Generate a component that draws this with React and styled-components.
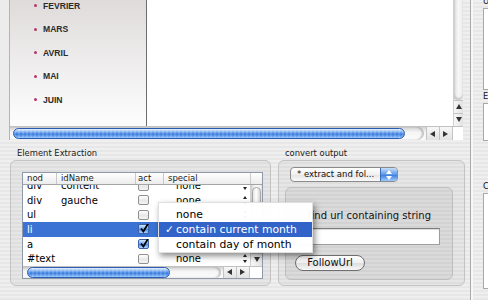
import React from 'react';
import styled, {createGlobalStyle, css} from 'styled-components';

const GlobalStyle = createGlobalStyle`
  html, body {
    margin: 0;
    padding: 0;
  }
  body {
    width: 488px;
    height: 300px;
    overflow: hidden;
    font-family: "DejaVu Sans", "Liberation Sans", sans-serif;
    color: #111;
  }
`;

const pinstripe = css`
  background: repeating-linear-gradient(180deg, #efefef 0 2px, #e7e7e7 2px 4px);
`;

const MONTHS = ['FEVRIER', 'MARS', 'AVRIL', 'MAI', 'JUIN'];

const NODES = [
    {nod: 'div', idName: 'content', act: false},
    {nod: 'div', idName: 'gauche', act: false},
    {nod: 'ul', idName: '', act: false},
    {nod: 'li', idName: '', act: true, selected: true},
    {nod: 'a', idName: '', act: true},
    {nod: '#text', idName: '', act: false},
];

const COLS = '33px 79px 28px 87px';

const Screen = styled.div`
  position: relative;
  width: 488px;
  height: 300px;
  overflow: hidden;
  display: flex;
  ${pinstripe}
`;

const MainColumn = styled.div`
  width: 470px;
  flex: none;
  display: flex;
  flex-direction: column;
`;

const WebFrame = styled.div`
  display: flex;
  height: 140px;
`;

const FrameStrip = styled.div`
  width: 9px;
  border-right: 1px solid #b4b4b4;
  background: #ececec;
`;

const WebView = styled.div`
  width: 453px;
  display: flex;
  flex-direction: column;
`;

const WebContent = styled.div`
  display: flex;
  height: 127px;
`;

const MonthList = styled.ul`
  width: 137px;
  box-sizing: border-box;
  margin: 0;
  padding: 0 0 0 24px;
  list-style: none;
  background: linear-gradient(#dfdbdb, #fbfbfb 92%);
  border-right: 1px solid #6d6d6d;
  display: flex;
  flex-direction: column;
  gap: 12.6px;
`;

const MonthItem = styled.li`
  display: flex;
  align-items: center;
  gap: 6px;
  height: 11px;
  font: bold 8.6px "Liberation Sans", Arial, sans-serif;
  color: #2b2b2b;

  &::before {
    content: '';
    width: 3px;
    height: 3px;
    border-radius: 50%;
    background: #b4386a;
  }
`;

const Page = styled.div`
  width: 306px;
  background: #fff;
`;

const VScroll = styled.div`
  width: ${p => p.$w}px;
  box-sizing: border-box;
  display: flex;
  flex-direction: column;
  border-left: 1px solid #cfcfcf;
  background: linear-gradient(90deg, #dadada, #f7f7f7 45%, #efefef);
`;

const VTrack = styled.div`
  flex: 1;
  position: relative;
  border-bottom-left-radius: 6px;
  border-bottom-right-radius: 6px;
  box-shadow: inset 0 -2px 2px rgba(0, 0, 0, 0.18);
`;

const VThumb = styled.div`
  margin: ${p => p.$top}px 1px 0;
  height: ${p => p.$h}px;
  border-radius: 5px;
  border: 1px solid #a6a6a6;
  background: linear-gradient(90deg, #e2e2e2, #ffffff 45%, #d6d6d6);
`;

const ArrowCell = styled.div`
  flex: none;
  width: ${p => (p.$vertical ? 'auto' : '12px')};
  height: ${p => (p.$vertical ? '12px' : 'auto')};
  display: flex;
  align-items: center;
  justify-content: center;
  background: linear-gradient(${p => (p.$vertical ? '90deg' : '180deg')}, #f7f7f7, #e2e2e2);
  border-${p => (p.$vertical ? 'top' : 'left')}: 1px solid #c4c4c4;
  color: #333;
`;

const Arrow = ({dir, vertical}) => {
    const points = {
        up: '3,0 6,5 0,5',
        down: '0,0 6,0 3,5',
        left: '0,3 5,0 5,6',
        right: '0,0 5,3 0,6',
    }[dir];
    return (
        <ArrowCell $vertical={vertical}>
            <svg width="6" height="6" viewBox="0 0 6 6">
                <polygon points={points} fill="currentColor"/>
            </svg>
        </ArrowCell>
    );
};

const HScroll = styled.div`
  height: ${p => p.$h}px;
  display: flex;
  background: linear-gradient(#d2d2d2, #f5f5f5 40%, #fbfbfb);
  border-top: 1px solid #c2c2c2;
`;

const HRail = styled.div`
  flex: 1;
  display: flex;
  align-items: center;
  padding-left: ${p => p.$pad}px;
  margin-right: 2px;
  border-radius: 0 7px 7px 0;
  box-shadow: inset -2px 0 2px rgba(0, 0, 0, 0.22);
`;

const AquaThumb = styled.div`
  width: ${p => p.$w}px;
  height: 11px;
  box-sizing: border-box;
  border-radius: 6px;
  border: 1px solid #2a5bb0;
  background:
    repeating-linear-gradient(90deg, rgba(255, 255, 255, 0.14) 0 2px, rgba(255, 255, 255, 0) 2px 4px),
    linear-gradient(#e6f0fd 0%, #8cb8f1 30%, #4a89e4 50%, #3f7fe0 62%, #93c7fc 100%);
`;

const Corner = styled.div`
  width: ${p => p.$w}px;
  background: #fff;
  border-left: 1px solid #c4c4c4;
`;

const HScrollBar = ({height, pad, thumb, corner}) => (
    <HScroll $h={height}>
        <HRail $pad={pad}>
            <AquaThumb $w={thumb}/>
        </HRail>
        <Arrow dir="left"/>
        <Arrow dir="right"/>
        <Corner $w={corner}/>
    </HScroll>
);

const ControlsRow = styled.div`
  display: flex;
  gap: 7px;
  padding: 7px 0 0 10px;
`;

const Group = styled.div`
  width: ${p => p.$w}px;
  display: flex;
  flex-direction: column;
`;

const GroupLabel = styled.div`
  height: 13px;
  line-height: 13px;
  padding-left: 7px;
  font-size: 8.4px;
  color: #1a1a1a;
`;

const GroupFrame = styled.div`
  height: 126px;
  box-sizing: border-box;
  border: 1px solid #c3c3c3;
  border-radius: 6px;
  background: rgba(0, 0, 0, 0.035);
  display: flex;
  flex-direction: column;
  align-items: flex-start;
  padding: ${p => p.$pad};
`;

const Table = styled.div`
  width: 241px;
  height: 107px;
  box-sizing: border-box;
  border: 1px solid #8e99aa;
  background: #fff;
  display: flex;
  flex-direction: column;
`;

const HeaderRow = styled.div`
  height: 12px;
  box-sizing: border-box;
  display: grid;
  grid-template-columns: ${COLS} 12px;
  border-bottom: 1px solid #a4a4a4;
  background: linear-gradient(#ffffff, #ececec);
  font-size: 8.5px;
  line-height: 11px;
  color: #1d1d1d;
`;

const HeaderCell = styled.div`
  padding-left: ${p => p.$pad}px;
  border-left: ${p => (p.$first ? 'none' : '1px solid #c9c9c9')};
  white-space: nowrap;
`;

const TableBody = styled.div`
  height: 81px;
  display: flex;
`;

const RowsViewport = styled.div`
  width: 227px;
  overflow: hidden;
`;

const RowsScroller = styled.div`
  margin-top: -6.6px;
`;

const Row = styled.div`
  height: 14.6px;
  display: grid;
  grid-template-columns: ${COLS};
  align-items: center;
  font-size: 10px;
  white-space: nowrap;
  background: ${p => (p.$selected ? '#3a73d4' : 'transparent')};
  color: ${p => (p.$selected ? '#fff' : '#000')};
`;

const Cell = styled.div`
  padding-left: ${p => p.$pad}px;
  overflow: hidden;
`;

const SpecialCell = styled.div`
  display: flex;
  align-items: center;
  justify-content: space-between;
  padding: 0 3px 0 13px;
  color: #000;
`;

const Box = styled.div`
  position: relative;
  width: 11px;
  height: 10px;
  box-sizing: border-box;
  border-radius: 2px;
  border: 1px solid ${p => (p.$checked ? '#3b62a6' : '#8f8f8f')};
  background: ${p => (p.$checked
        ? 'linear-gradient(#d4e6fc, #6ea6ee 50%, #4d8fe6 55%, #aad3ff)'
        : 'linear-gradient(#ffffff, #e8e8e8 55%, #f4f4f4)')};

  svg {
    position: absolute;
    left: 0;
    top: -3px;
  }
`;

const Checkbox = ({checked}) => (
    <Box $checked={checked}>
        {checked && (
            <svg width="11" height="12" viewBox="0 0 11 12">
                <path d="M2 6.5 L4.4 9.5 L9.5 1" stroke="#000" strokeWidth="1.8" fill="none"/>
            </svg>
        )}
    </Box>
);

const Stepper = () => (
    <svg width="4" height="9" viewBox="0 0 4 9">
        <polygon points="2,0 4,3 0,3" fill="#222"/>
        <polygon points="0,6 4,6 2,9" fill="#222"/>
    </svg>
);

const PopupButton = styled.div`
  margin-left: 5px;
  width: 108px;
  height: 15px;
  box-sizing: border-box;
  display: flex;
  border: 1px solid #8b8b8b;
  border-radius: 4px;
  overflow: hidden;
  background: linear-gradient(#ffffff, #f1f1f1 50%, #e4e4e4 52%, #fafafa);
  font-size: 8.5px;
  line-height: 13px;
`;

const PopupText = styled.div`
  flex: 1;
  padding-left: 6px;
  white-space: nowrap;
`;

const PopupArrows = styled.div`
  width: 16px;
  display: flex;
  align-items: center;
  justify-content: center;
  border-left: 1px solid #3d6cb8;
  background: linear-gradient(#c9dffa, #5c98e8 50%, #3c7edf 55%, #9ccbfd);
`;

const InnerBox = styled.div`
  margin-top: 5px;
  width: 168px;
  flex: 1;
  box-sizing: border-box;
  border: 1px solid #bebebe;
  border-radius: 6px;
  background: rgba(0, 0, 0, 0.05);
  display: flex;
  flex-direction: column;
  align-items: flex-start;
  padding-top: 22px;
`;

const FieldLabel = styled.div`
  padding-left: 22px;
  height: 12px;
  line-height: 12px;
  font-size: 10px;
  white-space: nowrap;
`;

const TextField = styled.div`
  margin: 6px 0 0 7px;
  width: 147px;
  height: 17px;
  box-sizing: border-box;
  border: 1px solid #9c9c9c;
  border-top-color: #7c7c7c;
  background: #fff;
  box-shadow: inset 0 1px 1px rgba(0, 0, 0, 0.15);
`;

const PushButton = styled.div`
  margin: 10px 0 0 9px;
  width: 70px;
  height: 16px;
  box-sizing: border-box;
  border: 1px solid #6e6e6e;
  border-radius: 8px;
  background: linear-gradient(#ffffff, #f0f0f0 48%, #dedede 52%, #f7f7f7);
  font-size: 10px;
  line-height: 14px;
  text-align: center;
`;

const Splitter = styled.div`
  width: 2px;
  flex: none;
  border-left: 1px solid #a9a9a9;
  background: #f7f7f7;
`;

const SideColumn = styled.div`
  flex: 1;
  display: flex;
  flex-direction: column;
  padding-left: 10px;
  min-width: 0;
`;

const SideLabel = styled.div`
  height: 12px;
  line-height: 12px;
  margin-top: ${p => p.$mt || 0}px;
  font-size: 8.4px;
  white-space: nowrap;
`;

const SideBox = styled.div`
  height: ${p => p.$h}px;
  margin-top: 1px;
  border: 1px solid #a8a8a8;
  border-right: none;
  background: #fff;
`;

const Menu = styled.div`
  position: absolute;
  left: 158px;
  top: 202px;
  width: 155px;
  height: 51px;
  box-sizing: border-box;
  padding-top: 3.5px;
  background: rgba(255, 255, 255, 0.97);
  border: 1px solid rgba(0, 0, 0, 0.12);
  box-shadow: 2px 3px 6px rgba(0, 0, 0, 0.45);
`;

const MenuItem = styled.div`
  position: relative;
  height: 15px;
  line-height: 15px;
  padding-left: 17px;
  font-size: 10.8px;
  white-space: nowrap;
  background: ${p => (p.$active ? '#3163c9' : 'transparent')};
  color: ${p => (p.$active ? '#fff' : '#000')};
`;

const Check = styled.span`
  position: absolute;
  left: 6px;
`;

const App = () => (
    <>
        <GlobalStyle/>
        <Screen>
            <MainColumn>
                <WebFrame>
                    <FrameStrip/>
                    <WebView>
                        <WebContent>
                            <MonthList>
                                {MONTHS.map(m => <MonthItem key={m}>{m}</MonthItem>)}
                            </MonthList>
                            <Page/>
                            <VScroll $w={10}>
                                <VTrack/>
                                <Arrow dir="up" vertical/>
                                <Arrow dir="down" vertical/>
                            </VScroll>
                        </WebContent>
                        <HScrollBar height={13} pad={3} thumb={392} corner={10}/>
                    </WebView>
                </WebFrame>

                <ControlsRow>
                    <Group $w={261}>
                        <GroupLabel>Element Extraction</GroupLabel>
                        <GroupFrame $pad="11px 7px 6px 11px">
                            <Table>
                                <HeaderRow>
                                    <HeaderCell $first $pad={4}>nod</HeaderCell>
                                    <HeaderCell $pad={4}>idName</HeaderCell>
                                    <HeaderCell $pad={2}>act</HeaderCell>
                                    <HeaderCell $pad={4}>special</HeaderCell>
                                    <HeaderCell/>
                                </HeaderRow>
                                <TableBody>
                                    <RowsViewport>
                                        <RowsScroller>
                                            {NODES.map((n, i) => (
                                                <Row key={i} $selected={n.selected}>
                                                    <Cell $pad={4}>{n.nod}</Cell>
                                                    <Cell $pad={5}>{n.idName}</Cell>
                                                    <Cell $pad={3}><Checkbox checked={n.act}/></Cell>
                                                    <SpecialCell>
                                                        none
                                                        <Stepper/>
                                                    </SpecialCell>
                                                </Row>
                                            ))}
                                        </RowsScroller>
                                    </RowsViewport>
                                    <VScroll $w={12}>
                                        <VTrack>
                                            <VThumb $top={2} $h={18}/>
                                        </VTrack>
                                        <Arrow dir="up" vertical/>
                                        <Arrow dir="down" vertical/>
                                    </VScroll>
                                </TableBody>
                                <HScrollBar height={12} pad={4} thumb={143} corner={12}/>
                            </Table>
                        </GroupFrame>
                    </Group>

                    <Group $w={187}>
                        <GroupLabel>convert output</GroupLabel>
                        <GroupFrame $pad="6px 11px 5px 6px">
                            <PopupButton>
                                <PopupText>* extract and fol...</PopupText>
                                <PopupArrows>
                                    <svg width="6" height="10" viewBox="0 0 6 10">
                                        <polygon points="3,0 6,4 0,4" fill="#fff"/>
                                        <polygon points="0,6 6,6 3,10" fill="#fff"/>
                                    </svg>
                                </PopupArrows>
                            </PopupButton>
                            <InnerBox>
                                <FieldLabel>find url containing string</FieldLabel>
                                <TextField/>
                                <PushButton>FollowUrl</PushButton>
                            </InnerBox>
                        </GroupFrame>
                    </Group>
                </ControlsRow>
            </MainColumn>

            <Splitter/>

            <SideColumn>
                <SideLabel $mt={-5}>Url</SideLabel>
                <SideBox $h={80}/>
                <SideLabel>Extraction</SideLabel>
                <SideBox $h={36}/>
                <SideLabel $mt={39}>Convert</SideLabel>
                <SideBox $h={94}/>
            </SideColumn>

            <Menu>
                <MenuItem>none</MenuItem>
                <MenuItem $active><Check>✓</Check>contain current month</MenuItem>
                <MenuItem>contain day of month</MenuItem>
            </Menu>
        </Screen>
    </>
);

export default App;
